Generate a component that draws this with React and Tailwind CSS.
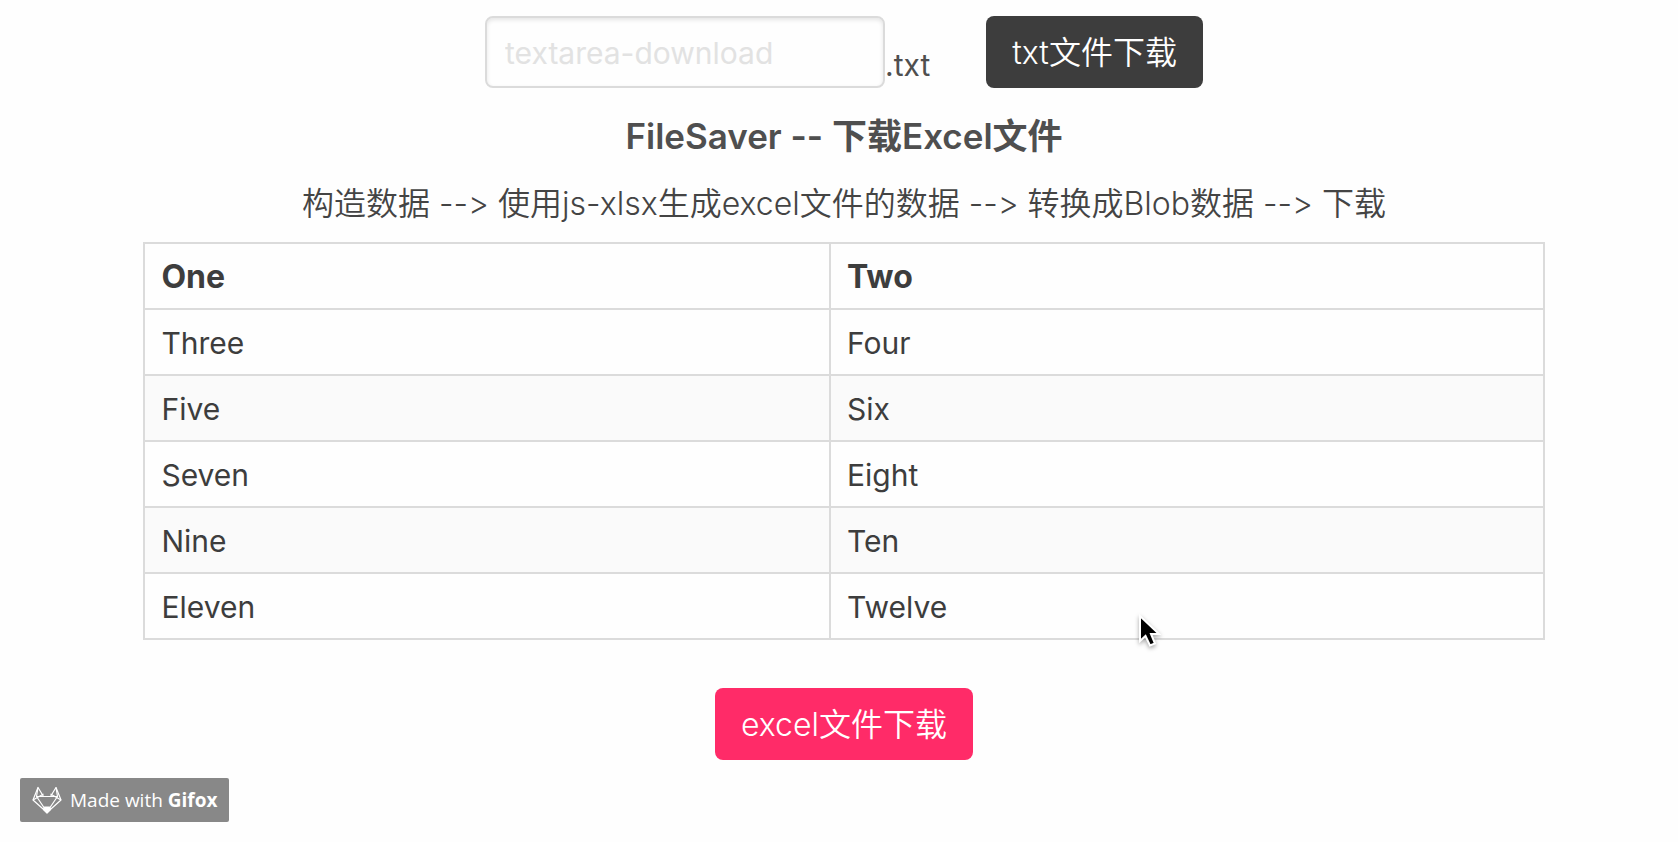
const rows = [
  ['Three', 'Four'],
  ['Five', 'Six'],
  ['Seven', 'Eight'],
  ['Nine', 'Ten'],
  ['Eleven', 'Twelve'],
];

const FoxLogo = () => (
  <svg className="h-7 w-[30px]" viewBox="0 0 30 28" fill="none" stroke="#fff" strokeWidth="1.2" strokeLinejoin="round" aria-hidden="true">
    <path d="M6 1.5 L1 14 L15 26.5 L29 14 L24 1.5 L18.5 10.5 H11.5 Z" />
    <path d="M6 1.5 L4.5 10.5 L11.5 10.5 M24 1.5 L25.5 10.5 L18.5 10.5 M1 14 L11.5 8 M29 14 L18.5 8 M4.5 10.5 L13 23 M25.5 10.5 L17 23" />
    <path d="M12.5 21 H17.5 L18.5 23.5 L15 27 L11.5 23.5 Z" fill="#fff" />
  </svg>
);

const Cursor = () => (
  <svg
    className="absolute right-[384px] -bottom-2.5 h-9 w-6 drop-shadow-[0_2px_2px_rgba(0,0,0,0.35)]"
    viewBox="0 0 24 36"
    aria-hidden="true"
  >
    <path d="M3 2 V27 L8.5 22 L13 31.5 L18 29.5 L14 20 H22 Z" fill="#000" stroke="#fff" strokeWidth="2" />
  </svg>
);

const DownloadButton = ({ className, children }) => (
  <button type="button" className={`h-18 rounded-lg px-[26px] pt-0.5 text-[32px] leading-12 font-[350] text-white ${className}`}>
    {children}
  </button>
);

const App = () => (
  <div className="min-h-screen bg-[#fefefe] font-['Inter','Noto_Sans_CJK_SC',sans-serif] text-[#4f4f4f] [font-variant-ligatures:none] [font-feature-settings:'calt'_0]">
    <main className="flex flex-col items-center pt-4 pl-2.5">
      <div className="flex items-end">
        <input
          type="text"
          aria-label="File name"
          placeholder="textarea-download"
          className="h-18 w-[400px] rounded-lg border-2 border-[#dbdbdb] bg-[#fefefe] px-[18px] pt-0.5 text-[30px] shadow-[inset_0_2px_4px_rgba(10,10,10,0.1)] placeholder:text-[#e2e2e2]"
        />
        <span className="text-[30px] leading-[46px]">.txt</span>
        <DownloadButton className="ml-14 bg-[#3d3d3d]">txt文件下载</DownloadButton>
      </div>

      <h2 className="mt-6 text-[35px] leading-12 font-semibold">FileSaver -- 下载Excel文件</h2>
      <p className="mt-5 text-[32px] leading-12 font-[350] text-[#444]">
        构造数据 --&gt; 使用js-xlsx生成excel文件的数据 --&gt; 转换成Blob数据 --&gt; 下载
      </p>

      <div className="relative mt-3.5 w-[84%]">
        <table className="w-full table-fixed border-collapse bg-[#fefefe] text-left text-[30px] leading-12 text-[#3d3d3d]">
          <thead>
            <tr className="text-[32px]">
              <th scope="col" className="w-[49%] border-2 border-[#dbdbdb] px-4 pt-[9px] pb-[7px] font-bold">One</th>
              <th scope="col" className="border-2 border-[#dbdbdb] px-4 pt-[9px] pb-[7px] font-bold">Two</th>
            </tr>
          </thead>
          <tbody>
            {rows.map(([one, two]) => (
              <tr key={one} className="even:bg-[#fafafa]">
                <td className="border-2 border-[#dbdbdb] px-4 pt-[9px] pb-[7px]">{one}</td>
                <td className="border-2 border-[#dbdbdb] px-4 pt-[9px] pb-[7px]">{two}</td>
              </tr>
            ))}
          </tbody>
        </table>
        <Cursor />
      </div>

      <DownloadButton className="mt-12 bg-[#ff2b68]">excel文件下载</DownloadButton>
    </main>

    <footer className="mt-[18px] flex pl-5">
      <a
        href="#gifox"
        className="flex h-11 items-center gap-2 rounded-xs bg-[#888] px-3 font-['Open_Sans',sans-serif] text-[19px] text-white"
      >
        <FoxLogo />
        <span>
          Made with <b>Gifox</b>
        </span>
      </a>
    </footer>
  </div>
);

export default App;
